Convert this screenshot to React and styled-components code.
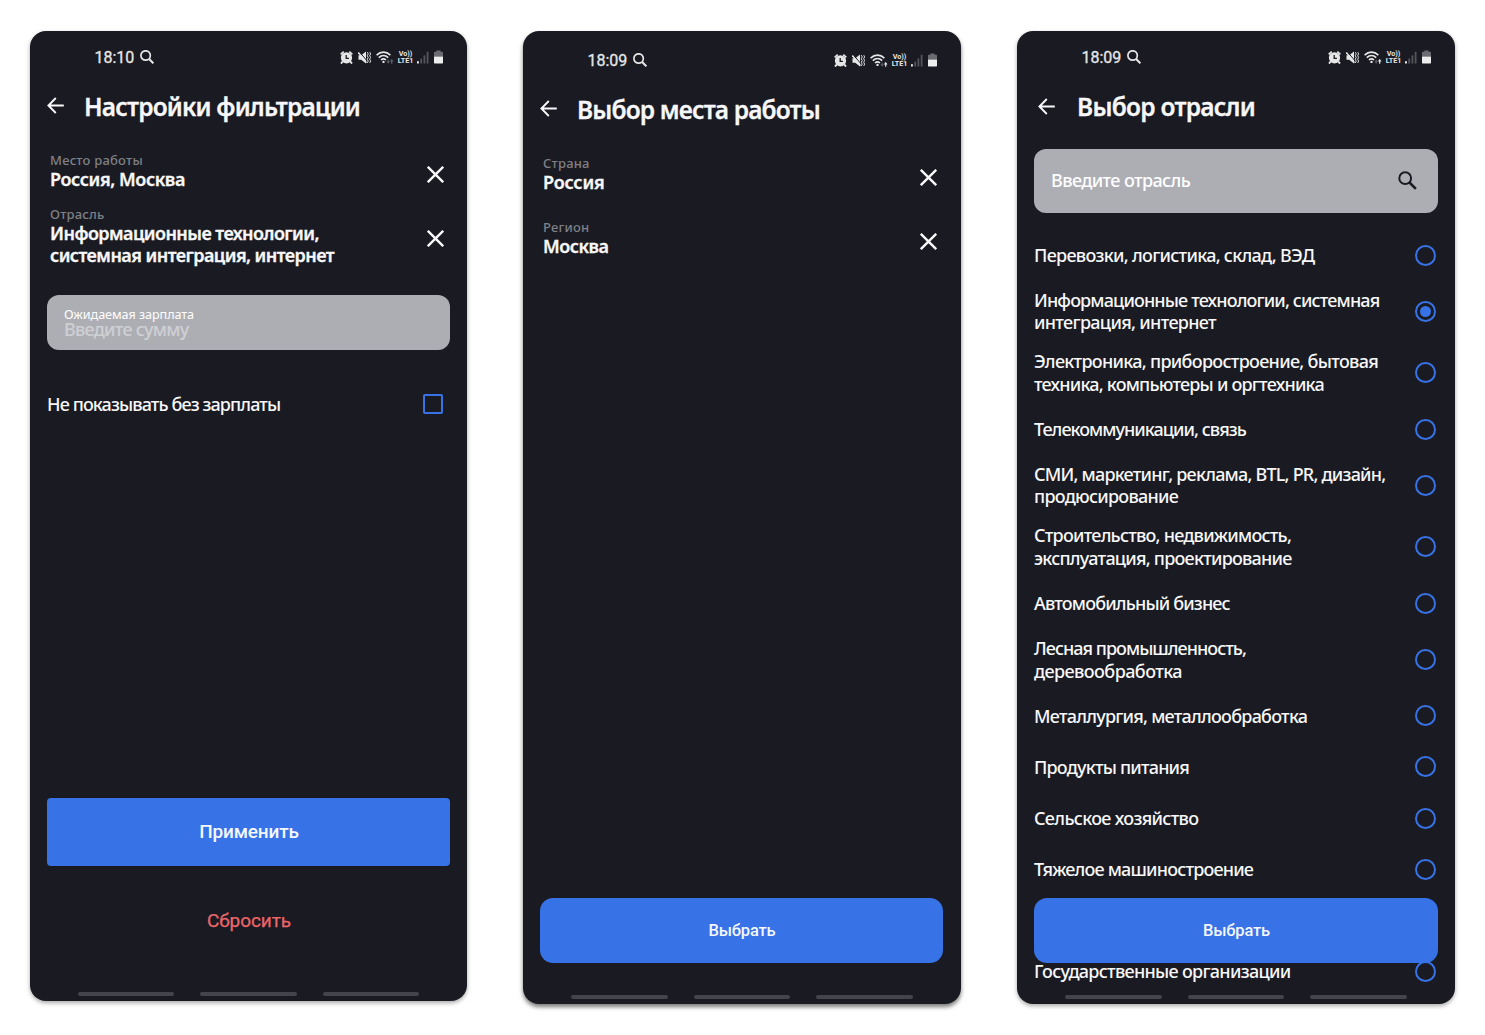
import React from 'react';
import styled, { createGlobalStyle } from 'styled-components';

const BLUE = '#3772e7';

const GlobalStyle = createGlobalStyle`
  * { box-sizing: border-box; }
  body { margin: 0; background: #fff; }
  button { border: 0; padding: 0; background: none; font: inherit; }
`;

const Board = styled.main`
  display: flex;
  align-items: flex-start;
  gap: 56px;
  padding: 31px 30px;
  width: 1485px;
  height: 1035px;
  overflow: hidden;
  font-family: 'Noto Sans', 'Open Sans', sans-serif;
  color: #f7f7f9;
`;

const PhoneFrame = styled.section`
  position: relative;
  display: flex;
  flex: none;
  flex-direction: column;
  width: ${(p) => p.$width}px;
  height: ${(p) => p.$height}px;
  padding-top: ${(p) => p.$top || 0}px;
  border-radius: 16px;
  overflow: hidden;
  background: #1a1b22;
  box-shadow: ${(p) => (p.$deep ? '0 3px 4px rgba(0,0,0,.52)' : '0 2px 4px rgba(0,0,0,.34)')};
`;

const StatusRow = styled.div`
  display: flex;
  flex: none;
  align-items: center;
  justify-content: space-between;
  height: 52px;
  padding: 0 24px 0 64.5px;
`;

const Clock = styled.div`
  display: flex;
  align-items: center;
  gap: 5.5px;
  font: 400 16px Roboto, sans-serif;
  -webkit-text-stroke: 0.3px currentColor;
  color: #e6e6e8;
`;

const Indicators = styled.div`
  display: flex;
  align-items: center;
  gap: 5px;
  color: #e6e6e8;
`;

const Carrier = styled.div`
  display: flex;
  flex-direction: column;
  align-items: center;
  width: 15px;
  margin: 0 -1px;
  font: 700 7.2px/7px Roboto, sans-serif;
  white-space: nowrap;
`;

const Header = styled.header`
  display: flex;
  flex: none;
  align-items: center;
  height: 48px;
  padding-left: ${(p) => p.$inset}px;
  gap: ${(p) => p.$gap}px;

  svg {
    margin-bottom: ${(p) => p.$lift || 0}px;
  }
`;

const Title = styled.h1`
  margin: 0;
  font-size: 24.5px;
  line-height: 32px;
  font-weight: 600;
  -webkit-text-stroke: 0.3px currentColor;
  letter-spacing: ${(p) => p.$track}px;
  white-space: nowrap;
`;

const Content = styled.div`
  display: flex;
  flex: 1;
  flex-direction: column;
  min-height: 0;
  padding: 0 ${(p) => p.$right || 17}px 0 17px;
`;

const Fields = styled.div`
  padding-top: 11px;
`;

const Field = styled.div`
  display: flex;
  align-items: center;
  justify-content: space-between;
  height: 64px;
  padding: 0 6.5px 0 3px;
`;

const FieldText = styled.div`
  padding-bottom: ${(p) => (p.$tall ? 4 : 5)}px;
`;

const FieldLabel = styled.div`
  font-size: 13px;
  line-height: 16px;
  font-weight: 500;
  letter-spacing: 0.2px;
  color: #7f8086;
`;

const Line = styled.span`
  display: block;
  font-size: 18px;
  line-height: 22.5px;
  font-weight: ${(p) => p.$weight || 500};
  -webkit-text-stroke: ${(p) => (p.$weight === 600 ? 0.3 : 0)}px currentColor;
  letter-spacing: ${(p) => p.$track}px;
  white-space: nowrap;
`;

const SalaryInput = styled.div`
  display: flex;
  flex-direction: column;
  justify-content: center;
  height: 55px;
  margin-top: 25px;
  padding: 0 17px;
  border-radius: 12px;
  background: #adaeb4;
`;

const SalaryLabel = styled.div`
  font-size: 12.6px;
  line-height: 13px;
  letter-spacing: -0.06px;
  color: #fff;
`;

const SalaryHint = styled.div`
  font-size: 18px;
  line-height: 17px;
  font-weight: 500;
  letter-spacing: -0.75px;
  color: #cfd0d4;
`;

const CheckRow = styled.label`
  display: flex;
  align-items: center;
  justify-content: space-between;
  height: 52px;
  margin-top: 28px;
  padding-right: 7px;
`;

const Checkbox = styled.span`
  width: 20px;
  height: 20px;
  border: 2px solid ${BLUE};
  border-radius: 2px;
`;

const Primary = styled.button`
  flex: none;
  height: ${(p) => p.$height}px;
  padding-left: 1px;
  border-radius: ${(p) => p.$radius}px;
  background: ${BLUE};
  color: #f4f7fe;
  font-family: Roboto, sans-serif;
  font-weight: 500;
  font-size: ${(p) => p.$size}px;
  letter-spacing: -0.15px;
`;

const Actions = styled.div`
  display: flex;
  flex-direction: column;
  margin-top: auto;
  padding-bottom: ${(p) => p.$bottom}px;
`;

const Reset = styled.button`
  height: 48px;
  margin-top: 30px;
  padding-left: 1px;
  color: #ec666b;
  font: 400 19px Roboto, sans-serif;
  letter-spacing: -0.1px;
  -webkit-text-stroke: 0.25px currentColor;
`;

const NavBar = styled.div`
  display: flex;
  flex: none;
  justify-content: center;
  gap: 26px;
  padding-bottom: 5px;
`;

const NavHandle = styled.span`
  width: 96.5px;
  height: 4.5px;
  border-radius: 3px;
  background: #44454c;
`;

const Search = styled.div`
  display: flex;
  flex: none;
  align-items: center;
  justify-content: space-between;
  height: 63.5px;
  margin-top: 18px;
  padding: 0 21px 1px 17px;
  border-radius: 12px;
  background: #adaeb4;
  color: #fff;
`;

const Options = styled.ul`
  margin: 17px 0 0;
  padding: 0;
  list-style: none;
`;

const Option = styled.li`
  display: flex;
  align-items: center;
  justify-content: space-between;
  height: ${(p) => (p.$double ? 61.5 : 51.1)}px;
  padding-right: 2.5px;
`;

const Radio = styled.span`
  display: flex;
  align-items: center;
  justify-content: center;
  width: 21px;
  height: 21px;
  border: 2px solid ${BLUE};
  border-radius: 50%;
  &::after {
    content: '';
    width: 11px;
    height: 11px;
    border-radius: 50%;
    background: ${(p) => (p.$on ? BLUE : 'transparent')};
  }
`;

const Overlay = styled.div`
  position: absolute;
  left: 0;
  right: 0;
  bottom: 0;
  display: flex;
  flex-direction: column;
  gap: 32px;
`;

const OverlayAction = styled.div`
  display: flex;
  flex-direction: column;
  padding: 0 17px;
`;

const BackIcon = () => (
  <svg width="17" height="17" viewBox="0 0 17 17" fill="none" stroke="currentColor" strokeWidth="1.9">
    <path d="M16.8 8.5H1.6M8.8 1L1.4 8.5L8.8 16" />
  </svg>
);

const CloseIcon = () => (
  <svg width="17" height="17" viewBox="0 0 17 17" fill="none" stroke="currentColor" strokeWidth="2.4">
    <path d="M0.8 0.8L16.2 16.2M16.2 0.8L0.8 16.2" />
  </svg>
);

const LensIcon = () => (
  <svg width="19" height="19" viewBox="0 0 19 19" fill="none" stroke="#1a1b22" strokeWidth="2">
    <circle cx="7.2" cy="7.2" r="5.9" />
    <path d="M11.5 11.5L17.9 17.9" strokeWidth="2.5" />
  </svg>
);

const AlarmIcon = () => (
  <svg width="13" height="13" viewBox="0 0 13 13" fill="none" stroke="currentColor">
    <circle cx="6.5" cy="6.8" r="5.6" fill="currentColor" stroke="none" />
    <path d="M0.7 3.4L3.7 0.7M12.3 3.4L9.3 0.7" strokeWidth="1.8" />
    <path d="M2.8 10.4L1 12.6M10.2 10.4L12 12.6" strokeWidth="1.9" />
    <path d="M6.2 4V7.3H8.9" stroke="#1a1b22" strokeWidth="1.3" />
  </svg>
);

const MuteVibrateIcon = () => (
  <svg width="13" height="13" viewBox="0 0 13 13" fill="none" stroke="currentColor">
    <path d="M0.5 4.2H3.2L8 0.4V12.4L3.2 8.8H0.5Z" fill="currentColor" stroke="none" />
    <path d="M1.7 1.2L8.8 9.6" stroke="#1a1b22" strokeWidth="1" />
    <path d="M0.3 1.4L8.5 11.6" strokeWidth="1.5" />
    <path
      d="M9.4 1.2L10.2 2.9L9.3 4.7L10.2 6.5L9.3 8.3L10.2 10.1L9.4 11.9M11.8 1.2L12.6 2.9L11.7 4.7L12.6 6.5L11.7 8.3L12.6 10.1L11.8 11.9"
      strokeWidth="1"
    />
  </svg>
);

const WifiIcon = ({ transfer }) => (
  <svg width="18" height="13" viewBox="0 0 18 13" fill="none" stroke="currentColor" strokeWidth="1.6">
    <path d="M0.6 4.1C4.6 0.1 10.4 0.1 14.4 4.1M2.8 6.6C5.6 3.9 9.4 3.9 12.2 6.6M5 9C6.6 7.6 8.4 7.6 10 9" />
    <circle cx="7.5" cy="10.9" r="1.2" fill="currentColor" stroke="none" />
    <path d="M12.2 8.4V11.2" stroke="#606168" strokeWidth="1.1" />
    <path d="M10.4 10.3L12.2 12.8L14 10.3Z" fill="#606168" stroke="none" />
    <path d="M15.7 12.7V9.5" stroke={transfer ? 'currentColor' : '#606168'} strokeWidth="1.2" />
    <path d="M13.9 10.4L15.7 7.8L17.5 10.4Z" fill={transfer ? 'currentColor' : '#606168'} stroke="none" />
  </svg>
);

const SignalIcon = () => (
  <svg width="12" height="13" viewBox="0 0 12 13" fill="#54555c">
    <rect x="0" y="10.2" width="1.9" height="2.3" fill="#e6e6e8" />
    <rect x="3.3" y="7.6" width="1.8" height="4.9" />
    <rect x="6.5" y="4.4" width="1.8" height="8.1" />
    <rect x="9.7" y="0.8" width="1.8" height="11.7" />
  </svg>
);

const BatteryIcon = () => (
  <svg width="9" height="14" viewBox="0 0 9 14">
    <path d="M2.4 0.5H6.6V1.7H8C8.6 1.7 9 2.1 9 2.7V6.5H0V2.7C0 2.1 0.4 1.7 1 1.7H2.4Z" fill="#6b6c71" />
    <path d="M0 6.5H9V12.4C9 13 8.6 13.4 8 13.4H1C0.4 13.4 0 13 0 12.4Z" fill="#ededee" />
  </svg>
);

function Status({ time, transfer }) {
  return (
    <StatusRow>
      <Clock>
        {time}
        <svg width="14" height="14" viewBox="0 0 14 14" fill="none" stroke="currentColor" strokeWidth="1.7">
          <circle cx="5.6" cy="5.5" r="4.7" />
          <path d="M8.9 8.8L13.4 13.3" strokeWidth="2.1" />
        </svg>
      </Clock>
      <Indicators>
        <AlarmIcon />
        <MuteVibrateIcon />
        <WifiIcon transfer={transfer} />
        <Carrier>
          <span>Vo))</span>
          <span>LTE1</span>
        </Carrier>
        <SignalIcon />
        <BatteryIcon />
      </Indicators>
    </StatusRow>
  );
}

const Nav = () => (
  <NavBar>
    <NavHandle />
    <NavHandle />
    <NavHandle />
  </NavBar>
);

function Selected({ label, lines }) {
  return (
    <Field>
      <FieldText $tall={lines.length > 1}>
        <FieldLabel>{label}</FieldLabel>
        {lines.map(([text, track]) => (
          <Line key={text} $weight={600} $track={track}>{text}</Line>
        ))}
      </FieldText>
      <CloseIcon />
    </Field>
  );
}

const industries = [
  [['Перевозки, логистика, склад, ВЭД', -0.71]],
  [['Информационные технологии, системная', -0.86], ['интеграция, интернет', -0.68]],
  [['Электроника, приборостроение, бытовая', -0.7], ['техника, компьютеры и оргтехника', -0.79]],
  [['Телекоммуникации, связь', -0.96]],
  [['СМИ, маркетинг, реклама, BTL, PR, дизайн,', -0.78], ['продюсирование', -0.74]],
  [['Строительство, недвижимость,', -0.77], ['эксплуатация, проектирование', -0.77]],
  [['Автомобильный бизнес', -0.84]],
  [['Лесная промышленность,', -0.97], ['деревообработка', -0.57]],
  [['Металлургия, металлообработка', -0.76]],
  [['Продукты питания', -0.8]],
  [['Сельское хозяйство', -0.67]],
  [['Тяжелое машиностроение', -0.82]],
  [],
  [['Государственные организации', -0.7]],
];

export default function App() {
  return (
    <>
      <GlobalStyle />
      <Board>
        <PhoneFrame $width={437} $height={970}>
          <Status time="18:10" />
          <Header $inset={17} $gap={20} $lift={3}>
            <BackIcon />
            <Title $track={-0.81}>Настройки фильтрации</Title>
          </Header>
          <Content>
            <Fields>
              <Selected label="Место работы" lines={[['Россия, Москва', -0.41]]} />
              <Selected
                label="Отрасль"
                lines={[['Информационные технологии,', -0.57], ['системная интеграция, интернет', -0.56]]}
              />
            </Fields>
            <SalaryInput>
              <SalaryLabel>Ожидаемая зарплата</SalaryLabel>
              <SalaryHint>Введите сумму</SalaryHint>
            </SalaryInput>
            <CheckRow>
              <Line $track={-0.89}>Не показывать без зарплаты</Line>
              <Checkbox />
            </CheckRow>
            <Actions $bottom={47.5}>
              <Primary $height={68.5} $radius={4} $size={19}>Применить</Primary>
              <Reset>Сбросить</Reset>
            </Actions>
          </Content>
          <Nav />
        </PhoneFrame>

        <PhoneFrame $width={438} $height={973} $top={3} $deep>
          <Status time="18:09" transfer />
          <Header $inset={17} $gap={20} $lift={3}>
            <BackIcon />
            <Title $track={-0.85}>Выбор места работы</Title>
          </Header>
          <Content $right={18}>
            <Fields>
              <Selected label="Страна" lines={[['Россия', -0.19]]} />
              <Selected label="Регион" lines={[['Москва', -0.48]]} />
            </Fields>
            <Actions $bottom={32}>
              <Primary $height={65} $radius={13} $size={16.5}>Выбрать</Primary>
            </Actions>
          </Content>
          <Nav />
        </PhoneFrame>

        <PhoneFrame $width={438} $height={973}>
          <Status time="18:09" transfer />
          <Header $inset={21} $gap={22} $lift={1}>
            <BackIcon />
            <Title $track={-0.74}>Выбор отрасли</Title>
          </Header>
          <Content>
            <Search>
              <Line $track={-0.6}>Введите отрасль</Line>
              <LensIcon />
            </Search>
            <Options>
              {industries.map((lines, i) => (
                <Option key={i} $double={lines.length > 1}>
                  <div>
                    {lines.map(([text, track]) => (
                      <Line key={text} $track={track}>{text}</Line>
                    ))}
                  </div>
                  <Radio $on={i === 1} />
                </Option>
              ))}
            </Options>
          </Content>
          <Overlay>
            <OverlayAction>
              <Primary $height={65} $radius={13} $size={16.5}>Выбрать</Primary>
            </OverlayAction>
            <Nav />
          </Overlay>
        </PhoneFrame>
      </Board>
    </>
  );
}
